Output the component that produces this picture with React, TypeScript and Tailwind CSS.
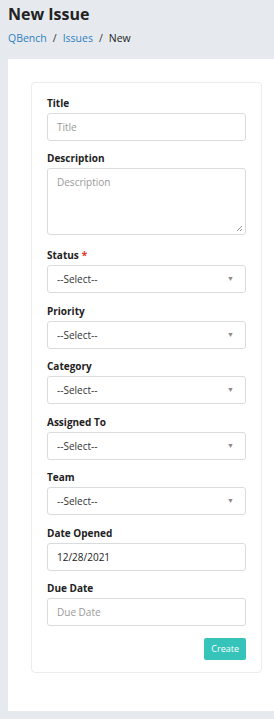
import React from "react";

const fields = ["Priority", "Category", "Assigned To", "Team"];

const Label = ({ text, required }: { text: string; required?: boolean }) => (
  <label className="mb-[3px] block text-[10px] font-bold leading-[14px] text-[#222]">
    {text}
    {required && <span className="ml-[3px] text-[#e3342f]">*</span>}
  </label>
);

const SelectBox = () => (
  <div className="flex h-[28px] items-center justify-between rounded-[3px] border border-[#d9dcdf] bg-white pl-[9px] pr-[11px] text-[10px] text-[#333]">
    <span>--Select--</span>
    <span className="text-[7px] text-[#888]">▼</span>
  </div>
);

const App = () => {
  return (
    <div
      className="min-h-[719px] bg-[#e6eaee] pb-[9px]"
      style={{ fontFamily: '"Open Sans", "Noto Sans", sans-serif' }}
    >
      <div className="px-2 pt-[4px]">
        <h1 className="text-[16px] font-bold leading-[20px] text-[#222]">
          New Issue
        </h1>
        <div className="mt-[7px] flex items-center gap-[6px] text-[10.5px] leading-[14px]">
          <span className="text-[#2f7ec2]">QBench</span>
          <span className="text-[#333]">/</span>
          <span className="text-[#2f7ec2]">Issues</span>
          <span className="text-[#333]">/</span>
          <span className="text-[#222]">New</span>
        </div>
      </div>

      <div className="ml-2 mt-[14px] bg-white pb-[38px] pl-[23px] pr-[12px] pt-[23px]">
        <div className="rounded-[4px] border border-[#ececec] px-[15px] pb-[12px] pt-[13px]">
          <div className="mb-[10px]">
            <Label text="Title" />
            <div className="flex h-[28px] items-center rounded-[3px] border border-[#d9dcdf] px-[9px] text-[10px] text-[#999]">
              Title
            </div>
          </div>

          <div className="mb-[13px]">
            <Label text="Description" />
            <div className="relative mt-[1px] h-[67px] rounded-[3px] border border-[#d9dcdf] px-[9px] pt-[6px] text-[10px] text-[#999]">
              Description
              <svg
                className="absolute bottom-[2px] right-[2px]"
                width="7"
                height="7"
                viewBox="0 0 7 7"
              >
                <path d="M1 6 L6 1 M4 6 L6 4" stroke="#777" strokeWidth="0.8" />
              </svg>
            </div>
          </div>

          <div className="mb-[11px]">
            <Label text="Status" required />
            <SelectBox />
          </div>

          {fields.map((f, i) => (
            <div key={f} className={i % 2 === 0 ? "mb-[10px]" : "mb-[11px]"}>
              <Label text={f} />
              <SelectBox />
            </div>
          ))}

          <div className="mb-[10px]">
            <Label text="Date Opened" />
            <div className="flex h-[28px] items-center rounded-[3px] border border-[#d9dcdf] px-[9px] text-[10px] text-[#222]">
              12/28/2021
            </div>
          </div>

          <div className="mb-[12px]">
            <Label text="Due Date" />
            <div className="flex h-[28px] items-center rounded-[3px] border border-[#d9dcdf] px-[9px] text-[10px] text-[#999]">
              Due Date
            </div>
          </div>

          <div className="flex justify-end">
            <button className="h-[22px] rounded-[2px] bg-[#36c3ba] px-[7px] text-[9px] text-white">
              Create
            </button>
          </div>
        </div>
      </div>
    </div>
  );
};

export default App;
